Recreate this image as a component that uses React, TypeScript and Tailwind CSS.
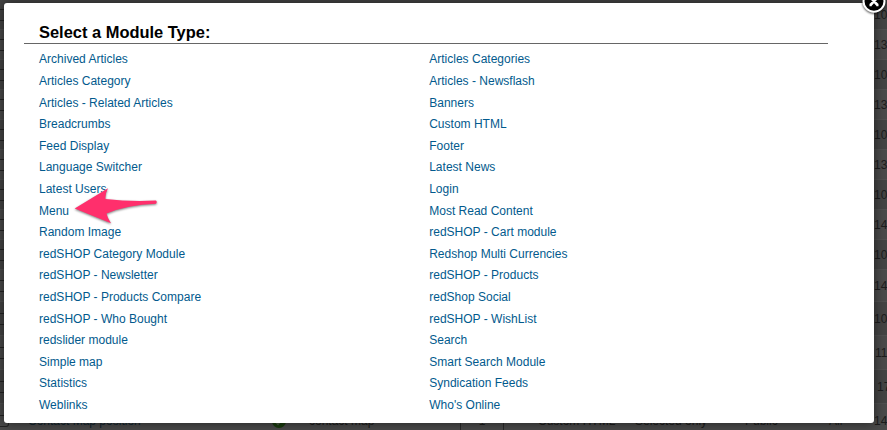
const left = [
  "Archived Articles", "Articles Category", "Articles - Related Articles", "Breadcrumbs",
  "Feed Display", "Language Switcher", "Latest Users", "Menu", "Random Image",
  "redSHOP Category Module", "redSHOP - Newsletter", "redSHOP - Products Compare",
  "redSHOP - Who Bought", "redslider module", "Simple map", "Statistics", "Weblinks",
];
const right = [
  "Articles Categories", "Articles - Newsflash", "Banners", "Custom HTML", "Footer",
  "Latest News", "Login", "Most Read Content", "redSHOP - Cart module",
  "Redshop Multi Currencies", "redSHOP - Products", "redShop Social",
  "redSHOP - WishList", "Search", "Smart Search Module", "Syndication Feeds", "Who's Online",
];
const rows: [string, number][] = [
  ["10", 30], ["13", 30], ["10", 30], ["13", 30], ["10", 30], ["13", 30], ["10", 30],
  ["14", 30], ["10", 30], ["14", 32], ["10", 34], ["119", 34], ["17", 34], ["14", 34],
];

function Links({ items }: { items: string[] }) {
  return (
    <ul className="w-[390.2px] shrink-0">
      {items.map((t) => (
        <li key={t} className="h-[21.6px] whitespace-nowrap text-[12px] leading-[21.6px] tracking-[0.01px] text-[#025a8d]">
          <a>{t}</a>
        </li>
      ))}
    </ul>
  );
}

function BackgroundTable() {
  return (
    <div className="flex h-[430px] w-[887px] flex-col overflow-hidden text-[12px] text-[#1c1c1c]">
      {rows.map(([id, h], i) => {
        const last = i === rows.length - 1;
        return (
          <div
            key={i}
            className={`flex w-[930px] shrink-0 items-center border-b border-[#505050] ${i % 2 ? "bg-[#4a4a4a]" : "bg-[#444444]"}`}
            style={{ height: h }}
          >
            <div className={`h-[12px] w-[9px] shrink-0 border-y border-[#242424] ${last ? "rounded-br-[3px] border-r" : ""}`} />
            {last ? (
              <div className="flex flex-1 items-center">
                <span className="w-[263px] pl-[19px] text-[#12252f]">Contact Map position</span>
                <svg width="14" height="14" viewBox="0 0 14 14">
                  <circle cx="7" cy="7" r="7" fill="#193b0d" />
                  <path d="M3 7l3 3 5-6" stroke="#4a5944" strokeWidth="2" fill="none" />
                </svg>
                <span className="w-[174px] pl-[23px]">contact map</span>
                <span className="h-[20px] w-[44px] border border-[#292929] text-center">1</span>
                <span className="w-[97px] pl-[34px] whitespace-nowrap">Custom HTML</span>
                <span className="w-[109px] pl-[34px] whitespace-nowrap">Selected only</span>
                <span className="w-[85px] pl-[35px]">Public</span>
                <span className="pl-[34px]">All</span>
              </div>
            ) : (
              <div className="flex-1" />
            )}
            <span className={`w-[56px] shrink-0 ${id === "17" ? "pl-[3px]" : id === "119" ? "pl-[1px]" : ""}`}>{id}</span>
          </div>
        );
      })}
    </div>
  );
}

export default function App() {
  return (
    <div className="relative h-[430px] w-[887px] overflow-hidden bg-[#404040] font-['Liberation_Sans',Arial,sans-serif]">
      <BackgroundTable />
      <div className="absolute top-[3px] left-[4px] h-[420px] w-[870px] rounded-[3px] bg-white pt-[18px] pl-[20px] shadow-[0_0_12px_rgba(0,0,0,0.55)]">
        <h2 className="h-[23px] w-[804px] border-b border-[#666666] pl-[15px] text-[16.45px] leading-[22px] font-bold text-black">
          Select a Module Type:
        </h2>
        <div className="flex pt-[5.42px] pl-[15px]">
          <Links items={left} />
          <Links items={right} />
        </div>
      </div>
      <svg className="absolute top-[184px] left-[70px]" width="96" height="46" viewBox="70 184 96 46">
        <path
          d="M74.700 208.500L108 188.300Q105 194 105.500 199Q130 202 156 200.600Q157.500 202 156 203.800Q127 205 106.500 213.500Q107.500 218 111 223.300Z"
          fill="#ff2f6c"
          className="drop-shadow-[0_1px_1px_rgba(0,0,0,0.5)]"
        />
      </svg>
      <svg className="absolute top-0 left-[857px]" width="30" height="18" viewBox="857 0 30 18">
        <circle cx="874" cy="1.200" r="10.500" fill="#000" stroke="#fff" strokeWidth="2" className="drop-shadow-[0_1px_1px_rgba(0,0,0,0.7)]" />
        <path d="M870.500 -2.500L877.500 5M877.500 -2.500L870.500 5M869.500 5h2.200M876.300 5h2.200" stroke="#fff" strokeWidth="2.600" />
      </svg>
    </div>
  );
}
